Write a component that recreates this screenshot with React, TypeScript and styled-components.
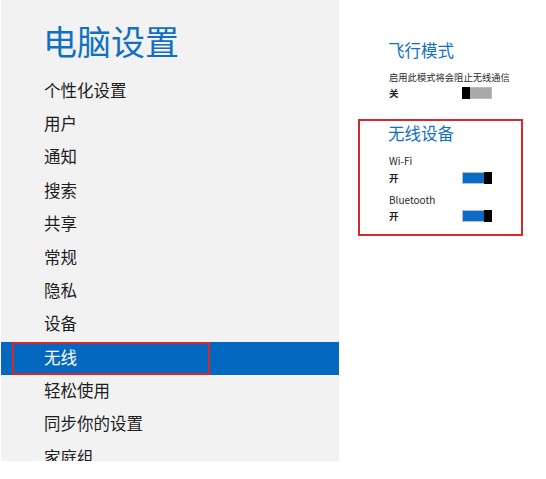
import React from "react";
import styled, { createGlobalStyle } from "styled-components";

const Global = createGlobalStyle`
  html, body { margin: 0; padding: 0; background: #ffffff; }
  body { font-family: "Noto Sans CJK SC", "Noto Sans", sans-serif; }
`;

const Page = styled.div`
  display: flex;
  width: 546px;
  height: 479px;
  background: #fff;
`;

const Sidebar = styled.nav`
  margin-left: 1px;
  width: 338px;
  height: 461px;
  overflow: hidden;
  background: #f2f2f2;
  display: flex;
  flex-direction: column;
`;

const Title = styled.h1`
  margin: 21px 0 13.4px 42px;
  font-size: 34px;
  line-height: 40px;
  font-weight: 400;
  color: #1170c4;
`;

const MenuItem = styled.div<{ $active?: boolean }>`
  position: relative;
  height: 33.4px;
  box-sizing: border-box;
  padding-bottom: 3px;
  flex: none;
  display: flex;
  align-items: center;
  padding-left: 43px;
  font-size: 16.5px;
  color: ${(p) => (p.$active ? "#ffffff" : "#1d1d1d")};
  background: ${(p) => (p.$active ? "#0568c0" : "transparent")};
`;

const Highlight = styled.span`
  position: absolute;
  left: 11px;
  top: 0;
  width: 198px;
  height: 100%;
  box-sizing: border-box;
  border: 2px solid #d42a2e;
`;

const Content = styled.main`
  flex: 1;
  padding-top: 39px;
  padding-left: 19px;
  display: flex;
  flex-direction: column;
`;

const Section = styled.section<{ $framed?: boolean }>`
  width: 165px;
  box-sizing: border-box;
  padding: ${(p) => (p.$framed ? "1px 0 0 28px" : "0 0 0 30px")};
  border: ${(p) => (p.$framed ? "2px solid #d42a2e" : "none")};
  height: ${(p) => (p.$framed ? "117px" : "auto")};
  margin-top: ${(p) => (p.$framed ? "19px" : "0")};
`;

const SectionTitle = styled.h2`
  margin: 0;
  font-size: 16.5px;
  line-height: 22px;
  font-weight: 400;
  color: #1170c4;
`;

const Desc = styled.div<{ $gap?: number; $latin?: boolean }>`
  margin-top: ${(p) => p.$gap ?? 0}px;
  font-size: ${(p) => (p.$latin ? "10px" : "9.3px")};
  line-height: 14px;
  color: #2a2a2a;
  white-space: nowrap;
  padding-left: 1px;
`;

const Row = styled.div<{ $gap?: number }>`
  display: grid;
  grid-template-columns: 74px 30px;
  align-items: center;
  height: 14px;
  margin-top: ${(p) => p.$gap ?? 2}px;
`;

const State = styled.span`
  font-size: 9.5px;
  font-weight: 700;
  color: #1d1d1d;
  padding-left: 1px;
`;

const Toggle = styled.span<{ $on?: boolean }>`
  position: relative;
  width: 30px;
  height: 12px;
  box-sizing: border-box;
  border: 1px solid #bdbdbd;
  background: ${(p) => (p.$on ? "#0a6cc8" : "#a9a9a9")};
  &::after {
    content: "";
    position: absolute;
    top: -1px;
    ${(p) => (p.$on ? "right: -1px;" : "left: -1px;")}
    width: 8px;
    height: 12px;
    background: #000;
  }
`;

const menu = [
  "个性化设置",
  "用户",
  "通知",
  "搜索",
  "共享",
  "常规",
  "隐私",
  "设备",
  "无线",
  "轻松使用",
  "同步你的设置",
  "家庭组",
];

export default function App() {
  return (
    <>
      <Global />
      <Page>
        <Sidebar>
          <Title>电脑设置</Title>
          {menu.map((m) => (
            <MenuItem key={m} $active={m === "无线"}>
              {m === "无线" && <Highlight />}
              {m}
            </MenuItem>
          ))}
        </Sidebar>
        <Content>
          <Section>
            <SectionTitle>飞行模式</SectionTitle>
            <Desc $gap={9}>启用此模式将会阻止无线通信</Desc>
            <Row>
              <State>关</State>
              <Toggle />
            </Row>
          </Section>
          <Section $framed>
            <SectionTitle>无线设备</SectionTitle>
            <Desc $gap={10} $latin>Wi-Fi</Desc>
            <Row $gap={3}>
              <State>开</State>
              <Toggle $on />
            </Row>
            <Desc $gap={8} $latin>Bluetooth</Desc>
            <Row $gap={2}>
              <State>开</State>
              <Toggle $on />
            </Row>
          </Section>
        </Content>
      </Page>
    </>
  );
}
